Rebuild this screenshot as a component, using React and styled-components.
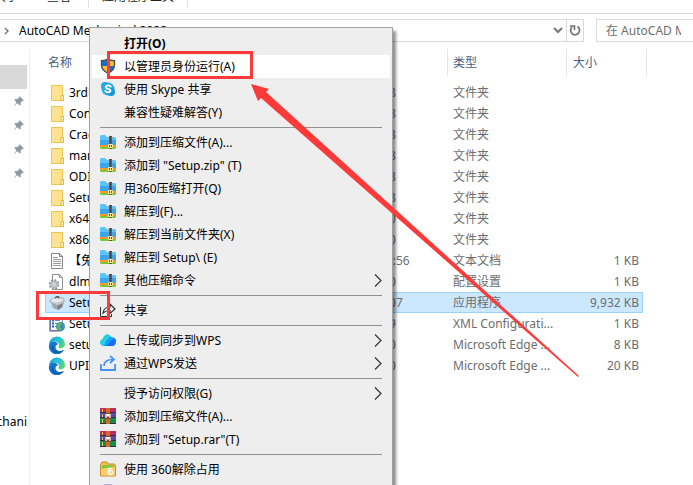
import React from "react";
import styled, { createGlobalStyle, css } from "styled-components";

const Global = createGlobalStyle`
  * { box-sizing: border-box; }
  body { margin: 0; background: #fff; overflow: hidden; }
  body, button, input, table {
    font-family: "Noto Sans", "Noto Sans CJK SC", sans-serif;
    font-size: 12px;
    line-height: 20px;
    color: #000;
  }
  button { border: 0; background: none; padding: 0; text-align: left; }
`;

const Window = styled.div`
  position: relative;
  display: flex;
  flex-direction: column;
  height: 100vh;
  overflow: hidden;
`;

const Ribbon = styled.div`
  display: flex;
  align-items: flex-end;
  height: 14px;
  border-bottom: 1px solid #d9d9d9;
  overflow: hidden;
`;

const RibbonGroup = styled.div`
  display: flex;
  flex: none;
  gap: 29px;
  height: 22px;
  margin-bottom: 5px;
  padding: 0 ${(p) => p.$pad}px;
  padding-left: ${(p) => (p.$first ? 0 : p.$pad)}px;
  border-right: 1px solid #e2e2e2;
`;

const RibbonTab = styled.button`
  display: flex;
  flex: none;
  justify-content: flex-end;
  width: ${(p) => (p.$clipped ? "18px" : "auto")};
  line-height: 22px;
  white-space: nowrap;
  color: #222;
`;

const AddressRow = styled.div`
  display: flex;
  gap: 12px;
  height: 23px;
  margin-top: 5px;
`;

const AddressBar = styled.div`
  display: flex;
  flex: 1;
  align-items: center;
  border: 1px solid #d9d9d9;
  border-left: 0;
`;

const Crumb = styled.button`
  display: flex;
  flex: 1;
  align-items: center;
  gap: 9px;
  padding-left: 4px;
  white-space: nowrap;
`;

const BarButton = styled.button`
  display: flex;
  align-items: center;
  justify-content: center;
  width: ${(p) => p.$width}px;
  height: 21px;
  border-left: ${(p) => (p.$divided ? "1px solid #d9d9d9" : "0")};
`;

const Search = styled.input`
  width: 97px;
  padding: 0 0 0 9px;
  border: 1px solid #d9d9d9;
  border-right: 0;
  border-radius: 0;
  outline: 0;
  &::placeholder { color: #6d6d6d; opacity: 1; }
`;

const Body = styled.div`
  display: flex;
  flex: 1;
  min-height: 0;
  margin-top: 7px;
`;

const Nav = styled.nav`
  display: flex;
  flex-direction: column;
  width: 30px;
  padding-top: 16px;
  border-right: 1px solid #f0f0f0;
  overflow: hidden;
`;

const NavItem = styled.button`
  display: flex;
  flex: none;
  align-items: center;
  width: 27px;
  height: 24px;
  padding-left: 13px;
  background: ${(p) => (p.$current ? "#d9d9d9" : "transparent")};
`;

const NavFolder = styled.button`
  display: flex;
  flex: none;
  justify-content: flex-end;
  align-items: center;
  width: 27px;
  height: 24px;
  margin-top: 225px;
  overflow: hidden;
  white-space: nowrap;
`;

const Files = styled.main`
  flex: 1;
  min-width: 0;
  padding-left: 15px;
  overflow: hidden;
`;

const Table = styled.table`
  width: 602px;
  table-layout: fixed;
  border-collapse: separate;
  border-spacing: 0;
`;

const Col = styled.col`
  width: ${(p) => p.$width}px;
`;

const Head = styled.th`
  height: 27px;
  padding: 0 0 0 ${(p) => p.$indent}px;
  border-right: 1px solid #e5e5e5;
  text-align: left;
  font-weight: 400;
  color: #4c607a;
`;

const HeadGap = styled.td`
  height: 6px;
  padding: 0;
`;

const Cell = styled.td`
  height: 21px;
  padding: 0 0 0 ${(p) => p.$indent || 0}px;
  line-height: 19px;
  white-space: nowrap;
  overflow: hidden;
  color: #6d6d6d;
  text-align: ${(p) => (p.$end ? "right" : "left")};
  border: 0 solid #99d1ff;
  ${(p) => p.$end && css`padding-right: 4px;`}
  ${(p) => p.$selected && css`
    background: #cce8ff;
    border-width: 1px 0;
    &:first-child { border-left-width: 1px; padding-left: 2px; }
    &:nth-child(4) { border-right-width: 1px; padding-right: 3px; }
  `}
`;

const FileName = styled.div`
  display: flex;
  align-items: center;
  gap: 3px;
  height: 19px;
  color: #000;
`;

const Menu = styled.div`
  position: absolute;
  left: 89px;
  top: 27px;
  width: 304px;
  padding: 4px 2px;
  border: 1px solid #a0a0a0;
  background: #eee;
  box-shadow: 3px 4px 3px rgba(0, 0, 0, 0.45);
`;

const MenuItem = styled.button`
  display: flex;
  align-items: center;
  width: 100%;
  height: 23px;
  padding: 0 8px;
  font-weight: ${(p) => (p.$bold ? 700 : 400)};
  background: ${(p) => (p.$hover ? "#fff" : "transparent")};
`;

const MenuIcon = styled.span`
  display: flex;
  flex: none;
  width: 24px;
  height: 18px;
`;

const MenuLabel = styled.span`
  flex: 1;
  white-space: nowrap;
`;

const Rule = styled.hr`
  height: 1px;
  margin: 3px 8px;
  border: 0;
  background: #919191;
`;

const Marker = styled.div`
  position: absolute;
  left: ${(p) => p.$x}px;
  top: ${(p) => p.$y}px;
  width: ${(p) => p.$w}px;
  height: ${(p) => p.$h}px;
  border: 3px solid #fb3a39;
  pointer-events: none;
`;

const Arrow = styled.svg`
  position: absolute;
  left: 251px;
  top: 84px;
  pointer-events: none;
`;

const Svg = ({ s = 18, children }) => (
  <svg width={s} height={s} viewBox={`0 0 ${s} ${s}`} fill="none" aria-hidden="true">{children}</svg>
);

const Folder = () => (
  <Svg>
    <path d="M3.500 1.500h11v9l1 .6v5.400h-12z" fill="#ffe391" stroke="#eac550" />
    <path d="M13 16.500v-5h2.500v5z" fill="#fff0b8" stroke="#e2b93d" />
  </Svg>
);

const TextFile = () => (
  <Svg>
    <path d="M3.500 1.500h8l3 3v12h-11z" fill="#fff" stroke="#868686" />
    <path d="M11.500 1.500v3h3" stroke="#868686" />
    <path d="M5 5.500h5M5 7.500h8M5 9.500h8M5 11.500h8M5 13.500h8" stroke="#999" />
  </Svg>
);

const ConfigFile = () => (
  <Svg>
    <path d="M4.500 1.500h7l3 3v12h-10z" fill="#fff" stroke="#919191" />
    <path d="M11.500 1.500v3h3" stroke="#919191" />
    <circle cx="6" cy="11.500" r="4.500" fill="#e3e6e8" stroke="#8d9398" strokeWidth="1.600" strokeDasharray="2 1.500" />
    <circle cx="6" cy="11.500" r="3.300" fill="#d0d4d7" stroke="#979da2" strokeWidth=".8" />
    <circle cx="6" cy="11.500" r="1.300" fill="#fff" stroke="#8d9398" strokeWidth=".6" />
  </Svg>
);

const Installer = () => (
  <Svg>
    <path d="M3 8h13l-1.500 5L10 16l-5-2z" fill="#a3a9af" />
    <path d="M9 10l6-2-1 5-4 3z" fill="#777e85" />
    <path d="M1.500 6l2-1L9 2.500l6 1.500 1.500 2-1 3-6 2.500L3 9z" fill="#c5cace" stroke="#969da3" strokeWidth=".6" />
    <path d="M3 5.500l6-2 6 1.500-1 2-5 1.500-5-1z" fill="#e6e9eb" />
    <path d="M7.500 4.500C8 2 11 2 11 4.500" stroke="#3e444a" strokeWidth="1.200" />
  </Svg>
);

const XmlFile = () => (
  <Svg>
    <path d="M2.500 2.500h10l2 2v11h-12z" fill="#f3f8ff" stroke="#7c8eab" />
    <path d="M2 3v13h11" stroke="#536384" strokeWidth="1.200" />
    <path d="M4 5.500h2M4 8.500h2M4 11.500h2" stroke="#2d56b5" strokeWidth="2" />
    <path d="M7 5.500h5M7 8.500h4M7 11.500h3" stroke="#6c89c5" />
    <circle cx="12.500" cy="11.500" r="4.500" fill="#3f7ed0" />
    <path d="M9 9l3-2 2 2-2 3 2 2-2 2c-2-1-4-3-3-7zM15 9l2 2-1 3z" fill="#59b956" />
  </Svg>
);

const Edge = ({ id }) => (
  <Svg>
    <defs>
      <linearGradient id={id} x1="1" y1="3" x2="17" y2="10" gradientUnits="userSpaceOnUse">
        <stop stopColor="#1ba4e0" /><stop offset=".55" stopColor="#29c3cf" /><stop offset="1" stopColor="#69d957" />
      </linearGradient>
    </defs>
    <path d="M1 9a8 8 0 0 1 16-1c0 4-4 5-6 4-1-1 0-2 0-3C11 5 4 4 1 9z" fill={`url(#${id})`} />
    <path d="M1 9c2-5 8-4 9-.500-4 .500-3 6.500 2 6.500 2 0 3-1 4-1A8 8 0 0 1 1 9z" fill="#1177cd" />
    <path d="M6 9c-3 5 3 9 10 5a8 8 0 0 1-7 3c-5-1-7-6-3-8z" fill="#13549c" />
  </Svg>
);

const Shield = () => (
  <Svg s={16}>
    <path d="M8 .800c2 1.700 4 2 6.500 2v4c0 4-2.500 6.700-6.500 8.500-4-1.800-6.500-4.500-6.500-8.500v-4C4 2.800 6 2.500 8 .800z" fill="#ffbe2e" />
    <path d="M8 1v7H2V3c3 0 4-.500 6-2zM8 8h6c0 3-3 6-6 7z" fill="#1570c4" />
    <path d="M8 .800c2 1.700 4 2 6.500 2v4c0 4-2.500 6.700-6.500 8.500-4-1.800-6.500-4.500-6.500-8.500v-4C4 2.800 6 2.500 8 .800z" stroke="#4e5359" strokeWidth="1.400" />
  </Svg>
);

const Skype = () => (
  <Svg s={16}>
    <circle cx="8" cy="8" r="6.500" fill="#28a8ea" />
    <circle cx="5" cy="5" r="4" fill="#28a8ea" /><circle cx="11" cy="11" r="4" fill="#1596df" />
    <path d="M10.700 5.500C10 4 6 3.800 5.700 6c-.200 2.200 5 1.500 4.800 3.700-.200 2.200-4.500 2-5.200.100" stroke="#fff" strokeWidth="1.800" strokeLinecap="round" />
  </Svg>
);

const Zip = () => (
  <Svg s={16}>
    <path d="M0 2l1-1h4l2 2h8l1 1v8H0z" fill="#5cc4fa" /><path d="M0 6h16v5H0z" fill="#3ba5ee" />
    <path d="M0 11h16v2H0z" fill="#ff9b22" /><path d="M0 13h16v1l-1 1H1l-1-1z" fill="#75c83b" />
    <path d="M9 2h3v13H9z" fill="#8a4d26" />
    <path d="M10.500 2v8" stroke="#4f2f1e" strokeWidth="1" strokeDasharray="1 1" />
    <path d="M8.500 10.500h4v3h-4zM10.500 10v3" stroke="#ffe4a2" />
  </Svg>
);

const Share = () => (
  <Svg s={16}>
    <path d="M.500 5v9.500h11V12" stroke="#333" />
    <path d="M3 11c.500-4 3-6 7-6V2l5 5-5 4.500V8.500c-3 0-5 .500-7 2.500z" stroke="#333" strokeWidth="1.200" />
  </Svg>
);

const Cloud = () => (
  <Svg s={16}>
    <path d="M3.500 14C-1 13-.500 8 3 7 4 2 9 1 11 5c6 0 6 8 2 9z" fill="#159ff7" />
    <path d="M3 7c1-5 6-6 8-2-3 0-5 4-7 9-5 0-5-6-1-7z" fill="#20d3e1" />
    <path d="M16 9c0 3-2 5-4 5H4c5 0 6-6 11-8z" fill="#176cf0" />
  </Svg>
);

const Send = () => (
  <Svg s={16}>
    <path d="M.900 9v6h14.200V9" stroke="#4593f7" strokeWidth="1.800" />
    <path d="M4 11c0-4 3-6.500 9-6.500M10 1l4 3.500L10 8" stroke="#4593f7" strokeWidth="1.700" />
  </Svg>
);

const Rar = () => (
  <Svg s={16}>
    <path d="M0 0h16v5H0z" fill="#c12b5e" /><path d="M0 5h16v5H0z" fill="#534cac" /><path d="M0 10h16v6H0z" fill="#168c45" />
    <path d="M0 4.500h16M0 9.500h16M0 15.500h16" stroke="#382a43" />
    <path d="M2.500 1v3M2.500 6v3M2.500 11v4" stroke="#e6bd64" />
    <path d="M6 0h4v16H6z" fill="#d26a2c" /><path d="M5 5h6v6H5z" fill="#8a4330" />
    <path d="M6 10V6.500h1.500V8h1V6.500H10V10" stroke="#fff" strokeWidth="1.200" />
  </Svg>
);

const Unlock = () => (
  <Svg s={16}>
    <path d="M.500 3.500 2 1h5l1 2h6.500l1 2v10H.500z" fill="#f6bd52" stroke="#c98c35" />
    <path d="M2 4h12v4H2z" fill="#8cc63f" /><path d="M1 8l6-1 8-1v8.500H1z" fill="#ffcf6b" />
    <circle cx="10.500" cy="11.500" r="2" stroke="#fff" strokeWidth="1.300" />
    <path d="M8.500 11V8.500c0-1.500 3-1.500 3 0" stroke="#fff" strokeWidth="1.300" />
  </Svg>
);

const Violet = () => <Svg s={16}><rect x="2" width="12" height="14" rx="4" fill="#b3a7ef" /></Svg>;

const Pin = () => (
  <Svg s={12}>
    <path d="M6.500 1l4.500 4.500-1.500.300-2 2 .300 2-1 .800-2.300-2.300L.800 11l2.700-3.800L1.300 5l1-.900 2 .200 2-2z" fill="#8c98a3" />
  </Svg>
);

const Caret = () => (
  <svg width="8" height="14" viewBox="0 0 8 14" fill="none" aria-hidden="true">
    <path d="M1 .500L7 6.500l-6 6" stroke="#333" strokeWidth="1.200" />
  </svg>
);

const files = [
  [Folder, "3rdParty", "2021/3/3 19:18", "文件夹"],
  [Folder, "Content", "2021/3/3 19:18", "文件夹"],
  [Folder, "Crack", "2021/3/3 19:18", "文件夹"],
  [Folder, "manifest", "2021/3/3 19:18", "文件夹"],
  [Folder, "ODIS", "2021/3/3 19:18", "文件夹"],
  [Folder, "SetupRes", "2021/3/3 19:18", "文件夹"],
  [Folder, "x64", "2021/3/3 19:20", "文件夹"],
  [Folder, "x86", "2021/3/3 19:20", "文件夹"],
  [TextFile, "【免费", "2021/11/23 10:56", "文本文档", "1 KB"],
  [ConfigFile, "dlm.ini", "2021/3/3 19:20", "配置设置", "1 KB"],
  [Installer, "Setup.exe", "2021/2/18 19:07", "应用程序", "9,932 KB"],
  [XmlFile, "Setup.exe", "2021/3/3 19:19", "XML Configurati...", "1 KB"],
  [Edge, "setup.htm", "2021/3/3 19:20", "Microsoft Edge ...", "8 KB"],
  [Edge, "UPI.htm", "2021/3/3 19:20", "Microsoft Edge ...", "20 KB"],
];

const menu = [
  { label: "打开(O)", bold: true },
  { label: "以管理员身份运行(A)", Icon: Shield, hover: true },
  { label: "使用 Skype 共享", Icon: Skype },
  { label: "兼容性疑难解答(Y)" },
  null,
  { label: "添加到压缩文件(A)...", Icon: Zip },
  { label: '添加到 "Setup.zip" (T)', Icon: Zip },
  { label: "用360压缩打开(Q)", Icon: Zip },
  { label: "解压到(F)...", Icon: Zip },
  { label: "解压到当前文件夹(X)", Icon: Zip },
  { label: "解压到 Setup\\ (E)", Icon: Zip },
  { label: "其他压缩命令", Icon: Zip, sub: true },
  null,
  { label: "共享", Icon: Share },
  null,
  { label: "上传或同步到WPS", Icon: Cloud, sub: true },
  { label: "通过WPS发送", Icon: Send, sub: true },
  null,
  { label: "授予访问权限(G)", sub: true },
  { label: "添加到压缩文件(A)...", Icon: Rar },
  { label: '添加到 "Setup.rar"(T)', Icon: Rar },
  null,
  { label: "使用 360解除占用", Icon: Unlock },
  { label: "", Icon: Violet },
];

export default function App() {
  return (
    <>
      <Global />
      <Window>
        <Ribbon>
          <RibbonGroup $first $pad={17}>
            <RibbonTab $clipped>共享</RibbonTab>
            <RibbonTab>查看</RibbonTab>
          </RibbonGroup>
          <RibbonGroup $pad={13}>
            <RibbonTab>应用程序工具</RibbonTab>
          </RibbonGroup>
        </Ribbon>

        <AddressRow>
          <AddressBar>
            <Crumb>
              <svg width="6" height="8" viewBox="0 0 6 8" fill="none" aria-hidden="true">
                <path d="M1 1l3 3-3 3" stroke="#6f6f6f" strokeWidth="1.400" />
              </svg>
              AutoCAD Mechanical 2022
            </Crumb>
            <BarButton $width={16} aria-label="地址记录">
              <svg width="10" height="7" viewBox="0 0 10 7" fill="none" aria-hidden="true">
                <path d="M1 1l4 4 4-4" stroke="#777" strokeWidth="2" />
              </svg>
            </BarButton>
            <BarButton $width={17} $divided aria-label="刷新">
              <svg width="12" height="13" viewBox="0 0 12 13" fill="none" aria-hidden="true">
                <path d="M8.500 2.500a4.500 4.500 0 1 1-5.500.500" stroke="#707070" strokeWidth="1.700" />
                <path d="M1 2h4.500v4" stroke="#707070" strokeWidth="1.600" />
              </svg>
            </BarButton>
          </AddressBar>
          <Search type="search" aria-label="搜索" placeholder="在 AutoCAD Mechanical 2022 中搜索" />
        </AddressRow>

        <Body>
          <Nav>
            <NavItem $current aria-label="快速访问" />
            {["桌面", "下载", "文档", "图片"].map((n) => (
              <NavItem key={n} aria-label={n}><Pin /></NavItem>
            ))}
            <NavFolder>chani</NavFolder>
          </Nav>
          <Files>
            <Table>
              <colgroup>
                <Col $width={259} /><Col $width={144} /><Col $width={119} /><Col $width={76} /><Col $width={4} />
              </colgroup>
              <thead>
                <tr>
                  <Head $indent={3}>名称</Head>
                  <Head $indent={5}>修改日期</Head>
                  <Head $indent={5}>类型</Head>
                  <Head $indent={6} colSpan={2}>大小</Head>
                </tr>
                <tr><HeadGap colSpan={5} /></tr>
              </thead>
              <tbody>
                {files.map(([Icon, name, date, type, size], i) => {
                  const sel = i === 10;
                  return (
                    <tr key={i} aria-selected={sel}>
                      <Cell $selected={sel} $indent={3}>
                        <FileName><Icon id={`edge${i}`} />{name}</FileName>
                      </Cell>
                      <Cell $selected={sel} $indent={8}>{date}</Cell>
                      <Cell $selected={sel} $indent={5}>{type}</Cell>
                      <Cell $selected={sel} $end>{size}</Cell>
                      <td />
                    </tr>
                  );
                })}
              </tbody>
            </Table>
          </Files>
        </Body>

        <Menu role="menu">
          {menu.map((m, i) =>
            m ? (
              <MenuItem key={i} role="menuitem" $bold={m.bold} $hover={m.hover}>
                <MenuIcon>{m.Icon && <m.Icon />}</MenuIcon>
                <MenuLabel>{m.label}</MenuLabel>
                {m.sub && <Caret />}
              </MenuItem>
            ) : (
              <Rule key={i} />
            )
          )}
        </Menu>

        <Marker $x={107} $y={51} $w={146} $h={28} />
        <Marker $x={36} $y={291} $w={74} $h={29} />
        <Arrow width="330" height="295" viewBox="0 0 330 295" aria-hidden="true">
          <path d="M0 0L18 5 15 8 328 292 327 293 10 14 7 17z" fill="#fb3a39" />
        </Arrow>
      </Window>
    </>
  );
}
